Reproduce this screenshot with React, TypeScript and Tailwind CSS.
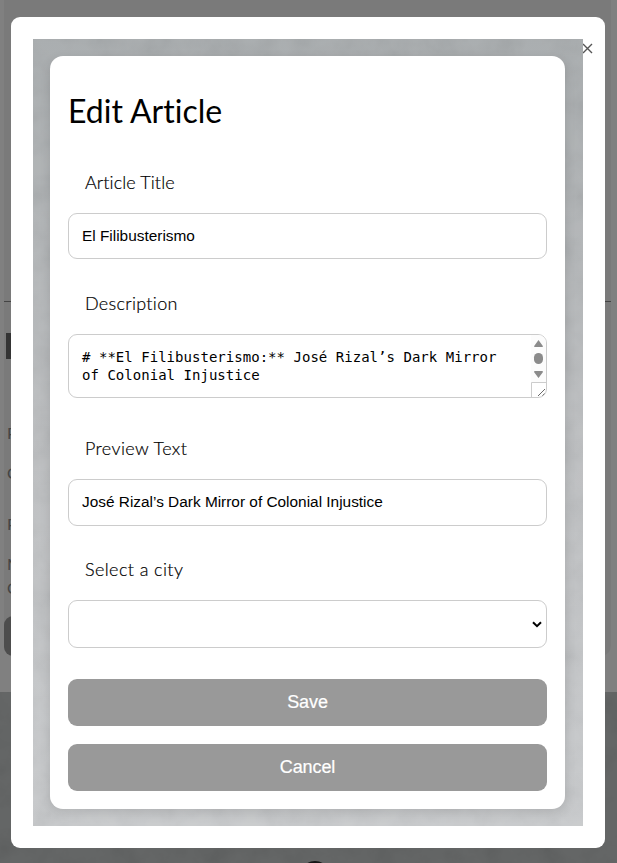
import type { ReactNode } from "react";

function Texture({ id, opacity }: { id: string; opacity: string }) {
  return (
    <svg className={`pointer-events-none absolute inset-0 h-full w-full ${opacity}`} aria-hidden="true">
      <filter id={id}>
        <feTurbulence type="fractalNoise" baseFrequency="0.035" numOctaves="5" seed="8" />
        <feColorMatrix type="matrix" values="1.4 0 0 0 0.05  1.4 0 0 0 0.05  1.4 0 0 0 0.05  0 0 0 0 1" />
      </filter>
      <rect width="100%" height="100%" filter={`url(#${id})`} />
    </svg>
  );
}

function Label({ children, spacing }: { children: ReactNode; spacing: string }) {
  return (
    <span className={`-mt-px mb-[19px] block h-6 pl-[17px] font-['Lato'] text-[18px] leading-6 font-light whitespace-nowrap text-black [-webkit-text-stroke:0.2px_black] [font-variant-ligatures:none] ${spacing}`}>
      {children}
    </span>
  );
}

const field = "w-full rounded-[9px] border border-[#ccc] bg-white px-[13px] pb-px font-['Liberation_Sans',sans-serif] text-[15.4px] text-black";
const action = "h-[47px] w-full shrink-0 rounded-[9px] bg-[#999] pb-px font-['Liberation_Sans',sans-serif] text-[18px] tracking-[-0.1px] text-white [-webkit-text-stroke:0.2px_white]";

function PageBehind() {
  return (
    <div className="flex h-full flex-col bg-[#5c5e5e]">
      <div className="h-[692px] shrink-0 bg-[#808080] pr-[6px] pl-1">
        <div className="h-[656px] rounded-b-[10px] bg-[#7a7a7a] font-['Lato'] text-[#444]">
          <div className="h-[302px] border-b border-[#444]" />
          <div className="ml-0.5 h-[119px] w-4 pt-[31px]">
            <div className="h-[26px] w-4 bg-[#343434]" />
          </div>
          <div className="flex h-[195px] w-8 flex-col pl-[3px] text-[16px] leading-6">
            <span>P</span>
            <span className="mt-4">C</span>
            <span className="mt-[27px]">P</span>
            <span className="mt-4">M</span>
            <span>C</span>
          </div>
          <div className="h-10 w-20 rounded-[9px] bg-[#4d4d4d]" />
        </div>
      </div>
      <div className="relative grow overflow-hidden bg-[#5c5e5e]">
        <Texture id="ground" opacity="opacity-5" />
        <div className="absolute top-[169px] left-[300px] size-[30px] rounded-full bg-[#161616]" />
      </div>
    </div>
  );
}

export default function App() {
  return (
    <div className="relative h-[863px] w-[617px] overflow-hidden">
      <PageBehind />
      <div className="absolute top-[17px] left-[11px] h-[831px] w-[594px] rounded-[9px] bg-white p-[22px]">
        <button className="absolute top-[24px] right-[11px] flex size-[13px] items-center justify-center text-[#555]" aria-label="Close">
          <svg width="13" height="18" viewBox="0 0 13 18" className="shrink-0" stroke="currentColor" strokeWidth="1.4">
            <path d="M2 5 11 14M11 5 2 14" />
          </svg>
        </button>
        <div className="relative h-[787px] w-[550px] bg-linear-to-b from-[#a4a8aa] via-[#b9bbbd] to-[#c6c8ca] py-[17px] pr-[18px] pl-[17px]">
          <Texture id="plaster" opacity="opacity-[0.07]" />
          <div className="relative flex h-[753px] flex-col rounded-[13px] bg-white px-[18px] pt-[34px] shadow-[0_4px_12px_rgba(0,0,0,0.12)]">
            <h1 className="h-[42px] font-['Lato'] text-[32px] leading-[42px] font-normal whitespace-nowrap text-black [font-variant-ligatures:none]">Edit Article</h1>
            <div className="mt-[39px]">
              <Label spacing="tracking-[0.1px]">Article Title</Label>
              <input className={`${field} block h-[46px]`} defaultValue="El Filibusterismo" />
            </div>
            <div className="mt-[33px]">
              <Label spacing="tracking-[0.3px]">Description</Label>
              <div className="flex h-16 overflow-hidden rounded-[9px] border border-[#ccc] bg-white">
                <div className="grow pt-[13px] pl-[13px] font-['DejaVu_Sans_Mono',monospace] text-[14px] leading-[18px] tracking-[0.03px] whitespace-nowrap text-black">
                  <div># **El Filibusterismo:** José Rizal’s Dark Mirror</div>
                  <div>of Colonial Injustice</div>
                </div>
                <svg width="15" height="62" viewBox="0 0 15 62" className="shrink-0">
                  <path d="M0 0H15V48H0Z" fill="#fcfcfc" />
                  <path d="M7.5 5 12 11.2Q12 12 11 12H4Q3 12 3 11.2ZM7.5 43 12 37Q12 36 11 36H4Q3 36 3 37Z" fill="#8b8b8b" />
                  <rect x="3" y="18" width="9" height="11" rx="4.5" fill="#8b8b8b" />
                  <path d="M.5 62V47.5H15" fill="none" stroke="#ccc" />
                  <path d="M7 61 14 54M11 61 14 58" stroke="#444" strokeWidth=".8" />
                </svg>
              </div>
            </div>
            <div className="mt-[39px]">
              <Label spacing="tracking-[0.4px]">Preview Text</Label>
              <input className={`${field} block h-[47px]`} defaultValue="José Rizal’s Dark Mirror of Colonial Injustice" />
            </div>
            <div className="mt-8">
              <Label spacing="tracking-[0.4px]">Select a city</Label>
              <button className={`${field} flex h-12 items-center justify-end pr-[4px]! pb-0!`} aria-label="Select a city">
                <svg width="10" height="7" viewBox="0 0 10 7" fill="none" stroke="#000" strokeWidth="2">
                  <path d="m1 1.2 4 4 4-4" />
                </svg>
              </button>
            </div>
            <button className={`${action} mt-[31px]`}>Save</button>
            <button className={`${action} mt-[18px]`}>Cancel</button>
          </div>
        </div>
      </div>
    </div>
  );
}
